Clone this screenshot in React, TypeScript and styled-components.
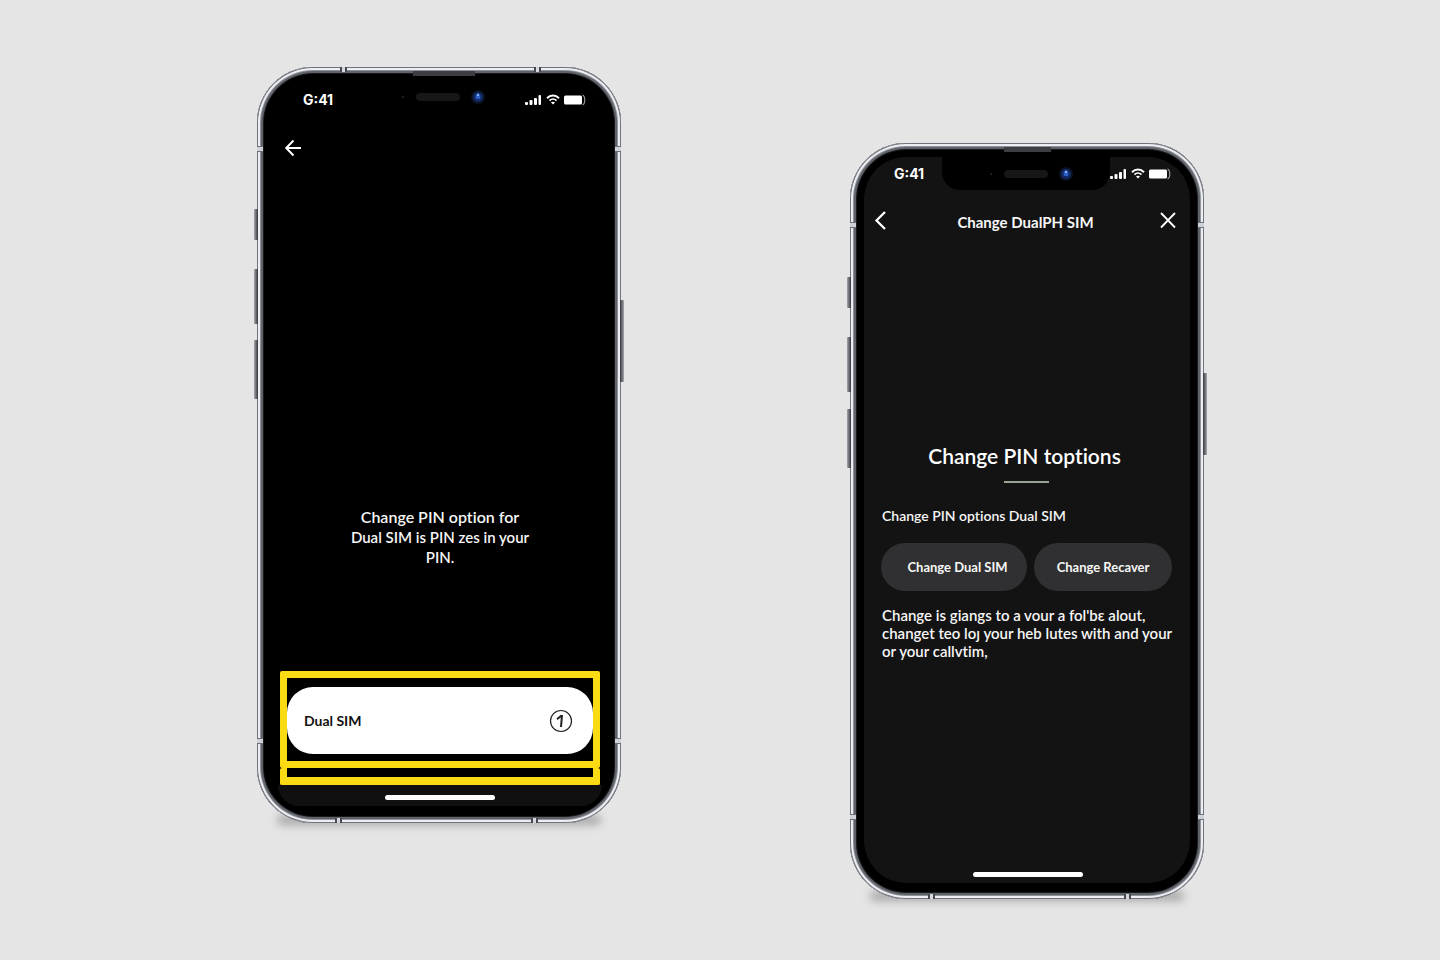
import React from "react";
import styled, { createGlobalStyle, css } from "styled-components";

const GlobalStyle = createGlobalStyle`
  *, *::before, *::after { box-sizing: border-box; }
  body {
    margin: 0;
    background: #e5e5e5;
    color: #f6f6f6;
    font-family: Lato, "Liberation Sans", sans-serif;
    font-weight: 600;
    font-variant-ligatures: none;
  }
  h1, h2, p { margin: 0; }
  button { font: inherit; color: inherit; border: 0; padding: 0; cursor: pointer; }
`;

const Stage = styled.main`
  min-height: 100vh;
  display: flex;
  justify-content: center;
  align-items: flex-start;
  gap: 229px;
  padding: 67px 0 60px 21px;
`;

const Device = styled.section<{ $width: number; $bezel: string; $drop?: number }>`
  position: relative;
  display: flex;
  flex: none;
  width: ${(p) => p.$width}px;
  min-height: 756px;
  margin-top: ${(p) => p.$drop ?? 0}px;
  padding: ${(p) => p.$bezel};
  border-radius: 56px;
  background: #000;
  box-shadow:
    inset 0 0 0 1px #70737b,
    inset 0 0 0 3px #eceef3,
    inset 0 0 0 4px #8f929a,
    inset 0 0 0 6px #5f6269,
    inset 0 0 1px 7px #1c1d20;

  &::before {
    content: "";
    position: absolute;
    z-index: -1;
    left: 20px;
    right: 20px;
    bottom: -2px;
    height: 10px;
    border-radius: 5px;
    background: #a8a8a8;
    filter: blur(4px);
  }
`;

const SideKey = styled.span<{ $side: "left" | "right"; $top: number; $length: number }>`
  position: absolute;
  ${(p) => p.$side}: -3px;
  top: ${(p) => p.$top}px;
  width: 4px;
  height: ${(p) => p.$length}px;
  border-radius: 1px;
  background: linear-gradient(to ${(p) => p.$side}, #33353a, #a4a7ae);
`;

const Band = styled.span<{ $edge: "left" | "right" | "top" | "bottom"; $at: number }>`
  position: absolute;
  ${(p) => p.$edge}: 0;
  ${(p) =>
    p.$edge === "left" || p.$edge === "right"
      ? css`
          top: ${p.$at}px;
          width: 6px;
          height: 6px;
          border: solid #6c6f77;
          border-width: 1px 0;
          background: #cfd1d8;
        `
      : css`
          left: ${p.$at}px;
          width: 7px;
          height: 5px;
          border: solid #45484e;
          border-width: 0 2px;
          background: #d6d8de;
        `}
`;

const Earpiece = styled.span<{ $left: number; $width: number }>`
  position: absolute;
  top: 4px;
  left: ${(p) => p.$left}px;
  width: ${(p) => p.$width}px;
  height: 5px;
  background: #3c3e42;
`;

const Screen = styled.div<{ $tone: string; $radius: number }>`
  flex: 1;
  min-width: 0;
  display: flex;
  flex-direction: column;
  overflow: hidden;
  border-radius: ${(p) => p.$radius}px;
  background: ${(p) => p.$tone};
`;

const StatusBar = styled.div<{ $height: number; $sides: string }>`
  display: flex;
  flex: none;
  align-items: center;
  justify-content: space-between;
  height: ${(p) => p.$height}px;
  padding: ${(p) => p.$sides};
`;

const Clock = styled.time`
  width: 48px;
  font: 700 14px/16px Inter, sans-serif;
  color: #fff;
`;

const Notch = styled.div<{ $raised?: boolean }>`
  align-self: stretch;
  display: flex;
  align-items: center;
  width: 168px;
  padding: 0 0 ${(p) => (p.$raised ? 5 : 0)}px 45px;
  border-radius: 0 0 18px 18px;
  background: #000;
`;

const Indicators = styled.div`
  display: flex;
  align-items: center;
  gap: 4px;
  height: 16px;
`;

const NavBar = styled.header<{ $height: number; $sides: string }>`
  display: flex;
  flex: none;
  align-items: center;
  justify-content: space-between;
  height: ${(p) => p.$height}px;
  padding: ${(p) => p.$sides};
`;

const IconButton = styled.button`
  display: flex;
  background: none;
  color: #fff;
`;

const NavTitle = styled.h1`
  padding: 2px 0 0 4px;
  font-size: 15px;
  line-height: 20px;
  font-weight: 700;
`;

const Message = styled.p`
  margin-top: auto;
  padding: 0 60px 104px 62px;
  font-size: 16px;
  line-height: 20px;
  text-align: center;
`;

const MessageDetail = styled.span`
  display: block;
  font-size: 15px;
`;

const Highlight = styled.div`
  flex: none;
  margin: 0 14px 0 16px;
  padding: 9px 0 7px;
  border: 7px solid #fbdb14;
  border-radius: 2px;
`;

const HighlightTail = styled.div`
  flex: none;
  height: 17px;
  margin: 0 14px 0 16px;
  border: solid #fbdb14;
  border-width: 0 7px 8px;
  border-radius: 2px;
`;

const SimOption = styled.button`
  display: flex;
  align-items: center;
  justify-content: space-between;
  width: 100%;
  height: 67px;
  padding: 0 20px 0 17px;
  border-radius: 26px;
  background: #fff;
  color: #111;
  font-size: 14px;
  font-weight: 700;
`;

const HomeArea = styled.div<{ $height: number; $tone?: string }>`
  display: flex;
  flex: none;
  align-items: center;
  justify-content: center;
  height: ${(p) => p.$height}px;
  margin: 0 12px 0 14px;
  padding-top: 3px;
  border-radius: 0 0 36px 36px;
  background: ${(p) => p.$tone ?? "transparent"};
`;

const HomeIndicator = styled.span`
  width: 110px;
  height: 5px;
  border-radius: 3px;
  background: #fff;
`;

const Chin = styled.div`
  flex: none;
  height: 10px;
`;

const Content = styled.div`
  flex: 1;
  display: flex;
  flex-direction: column;
  padding: 191px 18px 0 17px;
`;

const Heading = styled.h2`
  padding-right: 4px;
  font-size: 21px;
  line-height: 26px;
  font-weight: 600;
  text-align: center;
  white-space: nowrap;
  color: #fff;
`;

const Rule = styled.hr`
  width: 45px;
  height: 2px;
  margin: 12px auto 0;
  border: 0;
  background: #98a592;
`;

const Label = styled.p`
  margin-top: 24px;
  padding-left: 1px;
  font-size: 14px;
  line-height: 18px;
`;

const Choices = styled.div`
  display: flex;
  gap: 7px;
  margin: 18px 0 15px;
`;

const Choice = styled.button<{ $grow: number; $indent?: number }>`
  flex: ${(p) => p.$grow} 1 0;
  height: 48px;
  padding-left: ${(p) => p.$indent ?? 0}px;
  border-radius: 24px;
  background: #303032;
  font-size: 13px;
  font-weight: 700;
  white-space: nowrap;
`;

const Body = styled.p`
  padding-left: 1px;
  font-size: 15px;
  line-height: 18px;
  white-space: nowrap;
`;

function Sensors() {
  return (
    <svg width="92" height="16" viewBox="0 0 92 16" aria-hidden="true">
      <circle cx="4" cy="8" r="1" fill="#28282a" />
      <rect x="17" y="4" width="44" height="8" rx="4" fill="#171718" />
      <circle cx="79" cy="8" r="7" fill="#0b1224" />
      <circle cx="79" cy="8" r="5" fill="#122a68" />
      <path d="M79 4c2 1 3 3 2 6h-4c-1-3 0-5 2-6Z" fill="#2d5fc4" />
      <circle cx="79" cy="6" r="1" fill="#a5c4f2" />
    </svg>
  );
}

function StatusIcons() {
  return (
    <Indicators>
      <svg width="17" height="12" viewBox="0 0 17 12" fill="#fff" aria-hidden="true">
        <rect x="0" y="8" width="3" height="3" rx="1" />
        <rect x="4.5" y="6" width="3" height="5" rx="1" />
        <rect x="9" y="4" width="3" height="7" rx="1" />
        <rect x="13.5" y="1" width="2.5" height="10" rx="1" />
      </svg>
      <svg width="14" height="11" viewBox="0 0 14 11" fill="none" stroke="#fff" aria-hidden="true">
        <path d="M1 4.2C4.400 .6 9.600 .6 13 4.200" strokeWidth="2" />
        <path d="M3.500 6.700c2-2 5-2 7 0" strokeWidth="1.700" />
        <path d="M7 10.500 5 8.400c1.200-1 2.800-1 4 0Z" fill="#fff" stroke="none" />
      </svg>
      <svg width="22" height="12" viewBox="0 0 22 12" aria-hidden="true">
        <rect x="0" y="1.500" width="18" height="9" rx="1.500" fill="#fff" />
        <path d="M18.500 1c3 1.200 3 8.800 0 10" fill="none" stroke="#9a9a9a" strokeWidth="1.200" />
      </svg>
    </Indicators>
  );
}

function Hardware({
  earpieceLeft,
  earpiece,
  keys,
}: {
  earpieceLeft: number;
  earpiece: number;
  keys: [number, number, number, number];
}) {
  return (
    <>
      <SideKey $side="left" $top={keys[0]} $length={31} />
      <SideKey $side="left" $top={keys[1]} $length={55} />
      <SideKey $side="left" $top={keys[2]} $length={59} />
      <SideKey $side="right" $top={keys[3]} $length={82} />
      <Band $edge="left" $at={79} />
      <Band $edge="right" $at={79} />
      <Band $edge="left" $at={671} />
      <Band $edge="right" $at={671} />
      <Band $edge="bottom" $at={78} />
      <Band $edge="bottom" $at={274} />
      <Earpiece $left={earpieceLeft} $width={earpiece} />
    </>
  );
}

export default function App() {
  return (
    <>
      <GlobalStyle />
      <Stage>
        <Device $width={364} $bezel="7px">
          <Hardware earpieceLeft={156} earpiece={62} keys={[142, 202, 273, 233]} />
          <Band $edge="top" $at={83} />
          <Band $edge="top" $at={277} />
          <Screen $tone="#000" $radius={50}>
            <StatusBar $height={50} $sides="1px 28px 0 39px">
              <Clock>G:41</Clock>
              <Notch $raised>
                <Sensors />
              </Notch>
              <StatusIcons />
            </StatusBar>
            <NavBar $height={48} $sides="0 20px">
              <IconButton aria-label="Back">
                <svg width="18" height="18" viewBox="0 0 18 18" fill="none" stroke="currentColor" strokeWidth="2">
                  <path d="M17 9H2.500M9.500 1.500 2.200 9l7.300 7.500" />
                </svg>
              </IconButton>
            </NavBar>
            <Message>
              Change PIN option for
              <MessageDetail>Dual SIM is PIN zes in your</MessageDetail>
              <MessageDetail>PIN.</MessageDetail>
            </Message>
            <Highlight>
              <SimOption>
                Dual SIM
                <svg width="24" height="24" viewBox="0 0 24 24" fill="none" stroke="#222" aria-hidden="true">
                  <circle cx="12" cy="12" r="10.500" strokeWidth="1.200" />
                  <path d="M8 10.200 12.500 6.500M13 6l-1 12" strokeWidth="2" />
                </svg>
              </SimOption>
            </Highlight>
            <HighlightTail />
            <HomeArea $height={21} $tone="#101010">
              <HomeIndicator />
            </HomeArea>
            <Chin />
          </Screen>
        </Device>

        <Device $width={354} $bezel="14px 14px 16px" $drop={76}>
          <Hardware earpieceLeft={154} earpiece={47} keys={[134, 194, 266, 230]} />
          <Screen $tone="#131313" $radius={42}>
            <StatusBar $height={33} $sides="0 19px 0 30px">
              <Clock>G:41</Clock>
              <Notch>
                <Sensors />
              </Notch>
              <StatusIcons />
            </StatusBar>
            <NavBar $height={62} $sides="0 13px 0 10px">
              <IconButton aria-label="Back">
                <svg width="14" height="20" viewBox="0 0 14 20" fill="none" stroke="currentColor" strokeWidth="2.300">
                  <path d="M11 1 2.500 9.500l8.500 8.500" />
                </svg>
              </IconButton>
              <NavTitle>Change DualPH SIM</NavTitle>
              <IconButton aria-label="Close">
                <svg width="18" height="18" viewBox="0 0 18 18" fill="none" stroke="currentColor" strokeWidth="1.800">
                  <path d="M2 1l14 14.500M16 1 2 15.500" />
                </svg>
              </IconButton>
            </NavBar>
            <Content>
              <Heading>Change PIN toptions</Heading>
              <Rule />
              <Label>Change PIN options Dual SIM</Label>
              <Choices>
                <Choice $grow={139} $indent={7}>
                  Change Dual SIM
                </Choice>
                <Choice $grow={138}>Change Recaver</Choice>
              </Choices>
              <Body>
                Change is giangs to a vour a fol'bɛ alout,
                <br />
                changet teo loȷ your heb lutes with and your
                <br />
                or your callvtim,
              </Body>
            </Content>
            <HomeArea $height={20}>
              <HomeIndicator />
            </HomeArea>
          </Screen>
        </Device>
      </Stage>
    </>
  );
}
